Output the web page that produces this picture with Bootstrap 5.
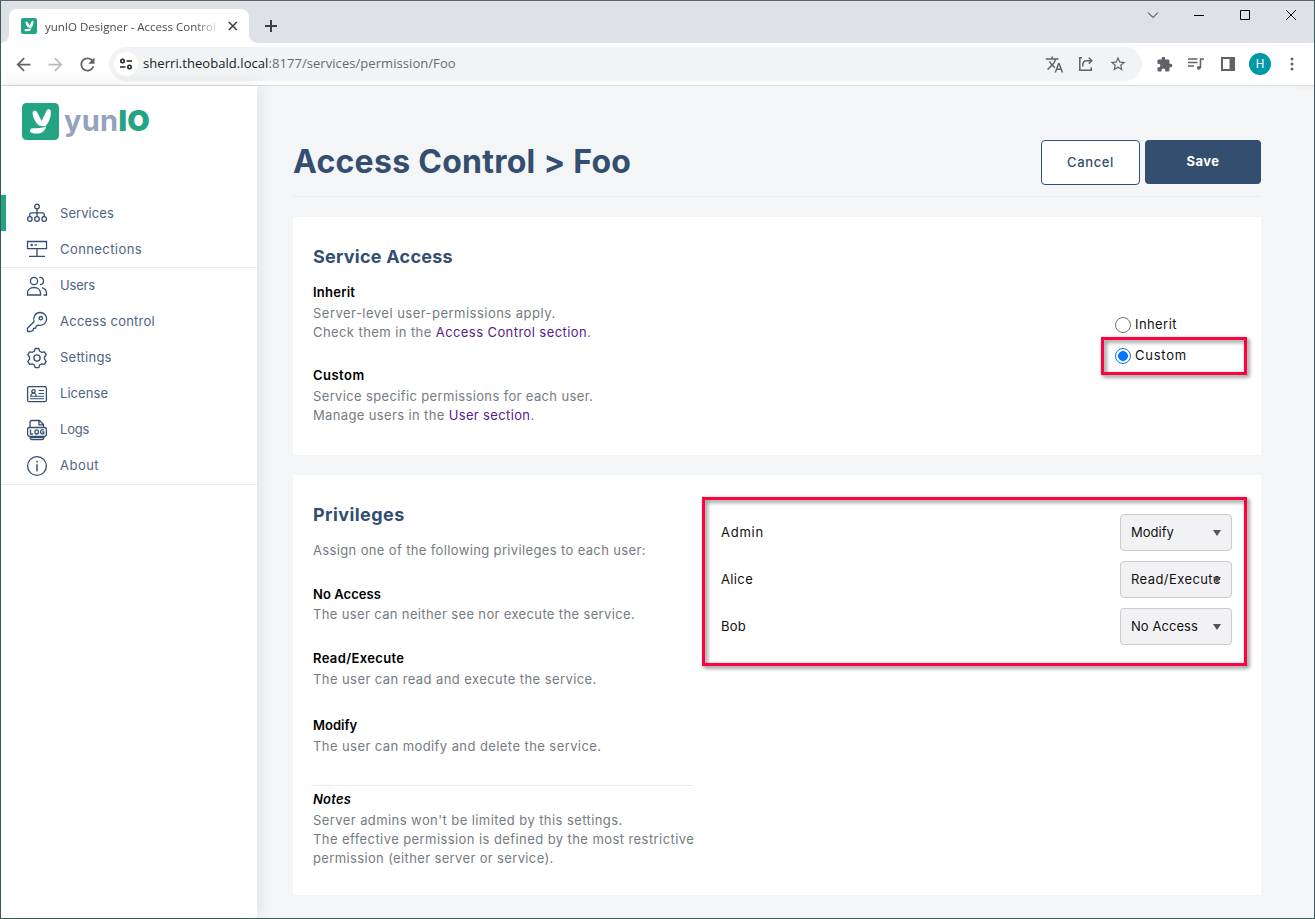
<!DOCTYPE html>
<html lang="en">
<head>
<meta charset="utf-8">
<title>yunIO Designer - Access Control</title>
<link href="https://cdn.jsdelivr.net/npm/bootstrap@5.3.0/dist/css/bootstrap.min.css" rel="stylesheet">
<style>
:root{--navy:#334e6f;--green:#23a583}
body{width:1315px;height:919px;overflow:hidden;font-family:Inter,"Open Sans",sans-serif;font-size:13px;line-height:19px;color:#111;background:#f4f5f7}
svg{display:block;flex:none}
/* tracking steps */
.t0{letter-spacing:.06px}.t2{letter-spacing:.24px}.t3{letter-spacing:.36px}.t4{letter-spacing:.42px}.t5{letter-spacing:.48px}.t7{letter-spacing:.76px}
.tn{letter-spacing:-.2px}
/* browser frame */
.window{width:1315px;height:919px;border:1px solid #405a57;border-top-color:#5f6368}
.chrome-font{font-family:"Open Sans","Noto Sans",sans-serif}
.tabstrip{height:42px;background:#dee1e6}
.tab{width:240px;height:34px;margin:8px 0 0 8px;padding:0 7px 0 12px;background:#fff;border-radius:8px 8px 0 0;position:relative}
.tab::before,.tab::after{content:"";position:absolute;bottom:0;width:8px;height:8px}
.tab::before{left:-8px;background:radial-gradient(circle at 0 0,#dee1e6 7.5px,#fff 8px)}
.tab::after{right:-8px;background:radial-gradient(circle at 100% 0,#dee1e6 7.5px,#fff 8px)}
.tab-title{width:172px;margin-left:8px;font-size:11.5px;color:#45494d;white-space:nowrap;-webkit-mask:linear-gradient(90deg,#000 150px,transparent 176px);mask:linear-gradient(90deg,#000 150px,transparent 176px)}
.new-tab{margin:19px 0 0 16px}
.win-btn{width:46px;height:28px}
.toolbar{height:43px;padding:0 6px;background:#fff;border-bottom:1px solid #dadce0;color:#5f6368}
.tool{width:32px;height:34px;display:flex;align-items:center;justify-content:center}
.omnibox{width:1033px;height:34px;margin:0 6px;padding:0 8px 0 5px;border-radius:17px;background:#f1f3f4}
.site-info{width:24px;height:24px;border-radius:50%;background:#fff;color:#202124}
.url{margin-left:5px;font-size:13px;letter-spacing:.06px;color:#686c70;white-space:nowrap;padding-bottom:1px}
.url b{font-weight:400;color:#202124}
.avatar{width:22px;height:22px;border-radius:50%;background:#0097a7;color:#fff;font:12px Roboto,sans-serif}
.page{height:832px;position:relative}
.scroll-corner{position:absolute;right:0;top:0;width:17px;height:4px;background:#f1f1f1}
/* navigation */
.sidebar{width:256px;background:#fff;box-shadow:0 0 16px rgba(40,50,60,.12);color:var(--navy)}
.brand{height:109px;padding:17px 0 0 21px}
.wordmark{margin-left:5px;font-size:29px;line-height:35px;font-weight:700;letter-spacing:.3px;color:#94a3bd}
.wordmark b{color:var(--green)}
.side-link{height:36px;padding-left:25px;gap:12px;color:#4d6583;text-decoration:none}
.side-link:hover{color:var(--navy)}
.side-link svg{color:var(--navy)}
.side-link.current{padding-left:20px;border-left:5px solid var(--green)}
.side-group{border-bottom:1px solid #e9ecef}
.side-group + .side-group span{padding-bottom:2px}
/* content */
.main{width:968px;margin-left:36px}
.page-head{height:111px;border-bottom:1px solid #e9ebed;padding-top:54px}
h1{font-size:32px;line-height:44px;font-weight:700;letter-spacing:.27px;color:var(--navy);margin:0;white-space:nowrap}
.actions{gap:5px}
.act{font-size:13px;line-height:19px;padding:0;border-radius:4px}
.act-cancel{width:99px;height:45px;background:#fff;border:1px solid var(--navy);color:var(--navy);font-weight:500;letter-spacing:.64px}
.act-save{width:116px;height:44px;background:var(--navy);border:0;color:#fff;font-weight:700;letter-spacing:.46px;padding-bottom:1px}
.panel{background:#fff;padding:26px 29px 27px 20px;margin-top:20px;position:relative}
h2{font-size:18px;line-height:27px;font-weight:700;color:var(--navy);margin:0 0 13px}
h3{font-size:13px;line-height:19px;font-weight:600;color:#000;margin:25px 0 2px}
h2 + h3{margin-top:0}
.desc{color:#757b82;margin:0;white-space:nowrap}
.desc a{color:#55218a;text-decoration:none}
.explain{width:380px}
.notes{border-top:1px solid #e9ecee;margin-top:29px;padding-top:4px}
.notes h3{margin-top:0}
.h-first{margin-bottom:1px}
.h-modify{margin-top:27px}
.h-custom{margin-top:24px}
.desc-last{margin-bottom:3px}
.choices{width:117px;padding-top:66px}
.choice{height:31px;gap:4px;white-space:nowrap}
.dot{width:16px;height:16px;flex:none;border:1px solid #767676;border-radius:50%;background:#fff}
.dot.on{border-color:#0075ff;background:radial-gradient(circle,#0075ff 4.6px,#fff 5.2px)}
.users{width:511px;gap:10px;padding-top:13px}
.pick{width:112px;height:37px;padding:0 10px;border:1px solid #ccc;border-radius:4px;background:#f2f2f5;position:relative;white-space:nowrap}
.pick::after{content:"";position:absolute;right:10px;top:15px;border:4px solid transparent;border-top:6px solid #555;border-bottom:0}
.marker{position:absolute;border:3px solid #fb0340;filter:drop-shadow(2px 2px 2px rgba(0,0,0,.55));pointer-events:none}
.marker-choice{right:14px;top:120px;width:146px;height:38px}
.marker-users{right:14px;top:22px;width:545px;height:169px}
</style>
</head>
<body>
<svg width="0" height="0" class="position-absolute">
  <symbol id="leaf" viewBox="0 0 37 37"><rect width="37" height="37" rx="4.500" fill="#23a583"/><path fill="#fff" d="M10.600 9.500c.6-2.200 3.800-2.200 4.800.2l4.200 8.300c2.200-4 3.800-7.500 4.800-10.200 1-2.300 4.400-2.200 4.500.8.200 5.200-1.800 10.500-5 14.200-3.500.8-7 .4-9-2.300-2.200-3-4.500-7.500-4.300-11zM8 28.300c0-1.800 1-3 2.800-3 4.700 0 9-.2 13.200-1.700-.6 4.300-4 7-8.800 7-3.700 0-7-.5-7.200-2.300z"/></symbol>
</svg>
<div class="window d-flex flex-column">
  <div class="tabstrip chrome-font d-flex">
    <div class="tab d-flex align-items-center">
      <svg width="16" height="16"><use href="#leaf"/></svg>
      <div class="tab-title">yunIO Designer - Access Control</div>
      <svg class="ms-2" width="18" height="16" viewBox="0 0 18 16" stroke="#3c4043" stroke-width="1.600"><path d="M4.800 4l8 8M12.800 4l-8 8"/></svg>
    </div>
    <svg class="new-tab" width="13" height="13" viewBox="0 0 13 13" stroke="#3c4043" stroke-width="2"><path d="M6 0v12M0 6h12"/></svg>
    <div class="ms-auto d-flex">
      <svg class="win-btn" viewBox="0 0 46 28" fill="none" stroke="#222"><path d="M18 11.500l5 5 5-5"/></svg>
      <svg class="win-btn" viewBox="0 0 46 28" stroke="#000"><path d="M18 14.500h10"/></svg>
      <svg class="win-btn" viewBox="0 0 46 28" fill="none" stroke="#000"><path d="M18.500 9.500h9v9h-9z"/></svg>
      <svg class="win-btn" viewBox="0 0 46 28" stroke="#000"><path d="M18 9l10 10M28 9l-10 10"/></svg>
    </div>
  </div>
  <div class="toolbar chrome-font d-flex align-items-center">
    <div class="tool"><svg width="21" height="21" viewBox="0 0 24 24" fill="currentColor"><path d="M20 11H7.830l5.590-5.590L12 4l-8 8 8 8 1.410-1.410L7.830 13H20v-2z"/></svg></div>
    <div class="tool"><svg width="21" height="21" viewBox="0 0 24 24" fill="#babcbe"><path d="M4 11h12.170l-5.590-5.590L12 4l8 8-8 8-1.410-1.410L16.170 13H4v-2z"/></svg></div>
    <div class="tool"><svg width="21" height="21" viewBox="0 0 24 24" fill="currentColor"><path d="M17.650 6.350C16.200 4.900 14.210 4 12 4c-4.420 0-7.990 3.580-7.990 8s3.570 8 7.990 8c3.730 0 6.840-2.550 7.730-6h-2.080c-.82 2.330-3.040 4-5.650 4-3.310 0-6-2.690-6-6s2.690-6 6-6c1.660 0 3.140.69 4.220 1.780L13 11h7V4l-2.350 2.350z"/></svg></div>
    <div class="omnibox d-flex align-items-center">
      <div class="site-info d-flex align-items-center justify-content-center"><svg width="14" height="12" viewBox="0 0 14 12" fill="none" stroke="currentColor" stroke-width="1.600"><circle cx="3.500" cy="3" r="1.700"/><path d="M7.500 3H13M1 9h5.500"/><circle cx="10.500" cy="9" r="1.700"/></svg></div>
      <div class="url"><b>sherri.theobald.local</b>:8177/services/permission/Foo</div>
      <div class="tool ms-auto"><svg width="19" height="19" viewBox="0 0 24 24" fill="currentColor"><path d="M12.870 15.070l-2.540-2.510.03-.03c1.740-1.940 2.980-4.170 3.710-6.530H17V4h-7V2H8v2H1v1.990h11.170C11.500 7.920 10.440 9.750 9 11.350 8.070 10.320 7.300 9.190 6.690 8h-2c.73 1.630 1.730 3.170 2.980 4.560l-5.090 5.020L4 19l5-5 3.110 3.110.76-2.040zM18.500 10h-2L12 22h2l1.120-3h4.750L21 22h2l-4.500-12zm-2.620 7l1.620-4.330L19.120 17h-3.240z"/></svg></div>
      <div class="tool"><svg width="16" height="16" viewBox="0 0 16 16" fill="none" stroke="currentColor" stroke-width="1.500"><path d="M4 1.800H1.800v12.400h11.400v-3M4.800 10.500V9c0-2.800 1.500-4.200 4-4.200h4.500M10.800 1.800l3 3-3 3"/></svg></div>
      <div class="tool"><svg width="18" height="18" viewBox="0 0 24 24" fill="currentColor"><path d="M22 9.240l-7.190-.62L12 2 9.190 8.630 2 9.240l5.460 4.730L5.820 21 12 17.270 18.180 21l-1.630-7.030L22 9.240zM12 15.400l-3.760 2.270 1-4.280-3.320-2.880 4.380-.38L12 6.100l1.710 4.040 4.380.38-3.320 2.880 1 4.280L12 15.400z"/></svg></div>
    </div>
    <div class="tool"><svg width="17" height="17" viewBox="0 0 24 24" fill="currentColor"><path d="M20.500 11H19V7c0-1.100-.9-2-2-2h-4V3.500C13 2.120 11.880 1 10.500 1S8 2.120 8 3.500V5H4c-1.100 0-1.990.9-1.990 2v3.800H3.500c1.490 0 2.700 1.210 2.700 2.700s-1.210 2.700-2.700 2.700H2V20c0 1.100.9 2 2 2h3.800v-1.500c0-1.490 1.210-2.700 2.700-2.700 1.490 0 2.700 1.210 2.700 2.700V22H17c1.100 0 2-.9 2-2v-4h1.500c1.380 0 2.500-1.120 2.500-2.500S21.880 11 20.500 11z"/></svg></div>
    <div class="tool"><svg width="16" height="14" viewBox="0 0 16 14" fill="none" stroke="currentColor" stroke-width="1.500"><path d="M0 2h9.500M0 5.500h9.500M0 9h6M12.500 11V2H16"/><circle cx="10.800" cy="10.800" r="1.900" fill="currentColor" stroke="none"/></svg></div>
    <div class="tool"><svg width="14" height="14" viewBox="0 0 14 14"><path fill="currentColor" fill-rule="evenodd" d="M0 0h14v14H0zM2 2v10h6.500V2z"/></svg></div>
    <div class="tool"><div class="avatar d-flex align-items-center justify-content-center">H</div></div>
    <div class="tool"><svg width="4" height="14" viewBox="0 0 4 14" fill="currentColor"><circle cx="2" cy="2" r="1.500"/><circle cx="2" cy="7" r="1.500"/><circle cx="2" cy="12" r="1.500"/></svg></div>
  </div>

  <div class="page d-flex">
    <div class="scroll-corner"></div>
    <nav class="sidebar">
      <div class="brand d-flex">
        <svg width="37" height="37"><use href="#leaf"/></svg>
        <div class="wordmark">yun<b>IO</b></div>
      </div>
      <div class="side-group">
        <a href="#" class="side-link current d-flex align-items-center"><svg width="22" height="22" viewBox="0 0 22 22" fill="none" stroke="currentColor" stroke-width="1.300"><circle cx="11" cy="4.500" r="2.300"/><circle cx="3.800" cy="17" r="2.300"/><circle cx="11" cy="17" r="2.300"/><circle cx="18.200" cy="17" r="2.300"/><path d="M11 6.800v7.900M3.800 14.700v-2.500q0-1.400 1.400-1.400h11.600q1.400 0 1.400 1.400v2.500"/></svg><span class="t0">Services</span></a>
        <a href="#" class="side-link d-flex align-items-center"><svg width="22" height="22" viewBox="0 0 22 22" fill="none" stroke="currentColor" stroke-width="1.300"><path d="M1.500 3.500h19v7.200h-19zM11 10.700v7.500M3 18.300h16"/><circle cx="5.700" cy="7" r=".6" fill="currentColor"/><path d="M8.500 7h2.500"/></svg><span class="t4">Connections</span></a>
      </div>
      <div class="side-group">
        <a href="#" class="side-link d-flex align-items-center"><svg width="22" height="22" viewBox="0 0 22 22" fill="none" stroke="currentColor" stroke-width="1.300"><circle cx="8" cy="6" r="3.600"/><path d="M1.500 20v-1.500c0-3.300 2.500-6 6.500-6s6.500 2.700 6.500 6V20zM13.300 2.600c2-.8 4.200.8 4.200 3.300s-1.800 4-3.500 3.700M16 12.700c2.700.8 4.500 3 4.500 5.500V20h-3"/></svg><span class="tn">Users</span></a>
        <a href="#" class="side-link d-flex align-items-center"><svg width="22" height="22" viewBox="0 0 22 22" fill="none" stroke="currentColor" stroke-width="1.300" stroke-linejoin="round"><path d="M8 10.800C6.500 5.800 9.700 1.500 14 1.500c3.700 0 6.600 2.700 6.600 6.400 0 4.300-4 7.200-8.200 6.200l-2.100.7-.6 2.200-2.200.5-.7 2.200-2.300.8H2.200q-.8 0-.8-.8v-2.400z"/><circle cx="14.800" cy="7.200" r="1.700"/></svg><span class="t2">Access control</span></a>
        <a href="#" class="side-link d-flex align-items-center"><svg width="22" height="22" viewBox="0 0 22 22" fill="none" stroke="currentColor" stroke-width="1.300" stroke-linejoin="round"><path d="M9.300 1.500h3.400l1 2.700 1.900 1.100 2.800-.5 1.800 3-1.700 2.200v2.200l1.700 2.200-1.800 3-2.800-.5-1.900 1.100-1 2.700H9.300l-1-2.700-1.900-1.100-2.800.5-1.800-3 1.700-2.200V10L1.800 7.800l1.800-3 2.800.5 1.900-1.100z"/><circle cx="11" cy="11" r="3.100"/></svg><span class="t2">Settings</span></a>
        <a href="#" class="side-link d-flex align-items-center"><svg width="22" height="22" viewBox="0 0 22 22" fill="none" stroke="currentColor" stroke-width="1.300"><rect x="1.600" y="3.700" width="18.800" height="15" rx="1.500"/><circle cx="7.500" cy="8.300" r="1.700"/><path d="M4.800 13.200c0-2 1-3 2.700-3s2.700 1 2.700 3M12.500 7.500H18M12.500 10.500H18M4 13.200H18M4 15.700h14" stroke-width="1.100"/></svg><span class="t0">License</span></a>
        <a href="#" class="side-link d-flex align-items-center"><svg width="22" height="22" viewBox="0 0 22 22" fill="none" stroke="currentColor" stroke-width="1.300"><path d="M4 8.500v-5q0-2 2-2h7.500l4 4v3M13 1.500v4.300h4.500M4 17.500q0 3 2 3h10q2 0 2-3M5 18.300h12"/><rect x="1.600" y="8.500" width="18.800" height="8.800" rx="2"/><path d="M4.500 10.500v4.500H7M17.800 11.200c-1.800-1.200-3.300 0-3.300 1.700s1.600 2.700 3.300 1.600v-1.500h-1.500"/><ellipse cx="10.700" cy="12.900" rx="1.800" ry="2.100"/></svg><span class="tn">Logs</span></a>
        <a href="#" class="side-link d-flex align-items-center"><svg width="22" height="22" viewBox="0 0 22 22" fill="none" stroke="currentColor" stroke-width="1.300"><circle cx="11" cy="11" r="9.400"/><path stroke-width="1.500" d="M11 9.300v7M11 5.700v1.700"/></svg><span class="t5">About</span></a>
      </div>
    </nav>

    <main class="main">
      <header class="page-head d-flex justify-content-between align-items-start">
        <h1>Access Control &gt; Foo</h1>
        <div class="actions d-flex align-items-start">
          <button class="btn act act-cancel">Cancel</button>
          <button class="btn act act-save">Save</button>
        </div>
      </header>

      <section class="panel d-flex justify-content-between">
        <div class="explain">
          <h2 class="t2">Service Access</h2>
          <h3 class="t2">Inherit</h3>
          <p class="desc"><span class="t5">Server-level user-permissions apply.</span><br><span class="t4">Check them in the <a href="#">Access Control section</a>.</span></p>
          <h3 class="h-custom t5">Custom</h3>
          <p class="desc desc-last t3">Service specific permissions for each user.<br>Manage users in the <a href="#">User section</a>.</p>
        </div>
        <div class="choices">
          <div class="choice d-flex align-items-center"><span class="dot"></span><span class="t4">Inherit</span></div>
          <div class="choice d-flex align-items-center"><span class="dot on"></span><span class="t7">Custom</span></div>
        </div>
        <div class="marker marker-choice"></div>
      </section>

      <section class="panel d-flex justify-content-between">
        <div class="explain">
          <h2 class="t4">Privileges</h2>
          <p class="desc t3">Assign one of the following privileges to each user:</p>
          <h3 class="h-first t0">No Access</h3>
          <p class="desc t3">The user can neither see nor execute the service.</p>
          <h3 class="t3">Read/Execute</h3>
          <p class="desc t4">The user can read and execute the service.</p>
          <h3 class="h-modify">Modify</h3>
          <p class="desc t4">The user can modify and delete the service.</p>
          <div class="notes">
            <h3 class="fst-italic t2">Notes</h3>
            <p class="desc"><span class="t4">Server admins won't be limited by this settings.</span><br><span class="t4">The effective permission is defined by the most restrictive</span><br><span class="t3">permission (either server or service).</span></p>
          </div>
        </div>
        <div class="users d-flex flex-column">
          <div class="d-flex align-items-center justify-content-between"><span class="t7">Admin</span><div class="pick d-flex align-items-center"><span>Modify</span></div></div>
          <div class="d-flex align-items-center justify-content-between"><span class="t3">Alice</span><div class="pick d-flex align-items-center"><span class="t4">Read/Execute</span></div></div>
          <div class="d-flex align-items-center justify-content-between"><span class="t2">Bob</span><div class="pick d-flex align-items-center"><span class="t0">No Access</span></div></div>
        </div>
        <div class="marker marker-users"></div>
      </section>
    </main>
  </div>
</div>
<script src="https://cdn.jsdelivr.net/npm/bootstrap@5.3.0/dist/js/bootstrap.bundle.min.js"></script>
</body>
</html>
